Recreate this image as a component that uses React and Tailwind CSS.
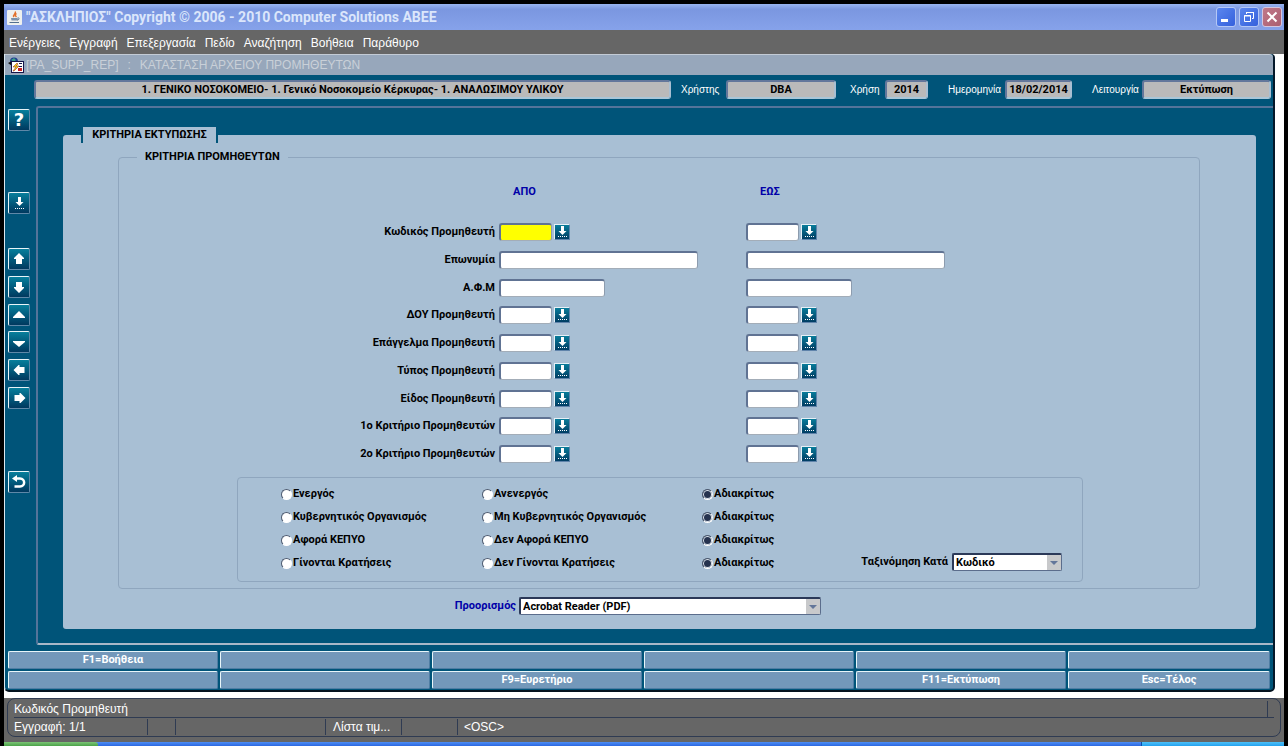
import React from "react";

const SANS = "font-['Liberation_Sans',Arial,sans-serif]";
const BOLD = "font-['Roboto','Noto_Sans',sans-serif] font-bold text-[11px] leading-4";

const menus = ["Ενέργειες", "Εγγραφή", "Επεξεργασία", "Πεδίο", "Αναζήτηση", "Βοήθεια", "Παράθυρο"];

const criteria = [
  { label: "Κωδικός Προμηθευτή", size: "sm", lov: true, active: true },
  { label: "Επωνυμία", size: "lg" },
  { label: "Α.Φ.Μ", size: "md" },
  { label: "ΔΟΥ Προμηθευτή", size: "sm", lov: true },
  { label: "Επάγγελμα Προμηθευτή", size: "sm", lov: true },
  { label: "Τύπος Προμηθευτή", size: "sm", lov: true },
  { label: "Είδος Προμηθευτή", size: "sm", lov: true },
  { label: "1ο Κριτήριο Προμηθευτών", size: "sm", lov: true },
  { label: "2ο Κριτήριο Προμηθευτών", size: "sm", lov: true },
];

const widths = { sm: "w-[53px]", md: "w-[106px]", lg: "w-[199px]" };

const radios = [
  ["Ενεργός", "Ανενεργός", "Αδιακρίτως"],
  ["Κυβερνητικός Οργανισμός", "Μη Κυβερνητικός Οργανισμός", "Αδιακρίτως"],
  ["Αφορά ΚΕΠΥΟ", "Δεν Αφορά ΚΕΠΥΟ", "Αδιακρίτως"],
  ["Γίνονται Κρατήσεις", "Δεν Γίνονται Κρατήσεις", "Αδιακρίτως"],
];

const fkeys = [
  "F1=Βοήθεια", "", "", "", "", "",
  "", "", "F9=Ευρετήριο", "", "F11=Εκτύπωση", "Esc=Τέλος",
];

const tools = [
  { name: "Βοήθεια", gap: "", icon: "help" },
  { name: "Λίστα τιμών", gap: "mt-[61px]", icon: "list" },
  { name: "Πρώτη εγγραφή", gap: "mt-[34px]", icon: "up" },
  { name: "Τελευταία εγγραφή", gap: "mt-[6px]", icon: "down" },
  { name: "Προηγούμενη", gap: "mt-[6px]", icon: "triUp" },
  { name: "Επόμενη", gap: "mt-[5px]", icon: "triDown" },
  { name: "Αριστερά", gap: "mt-[6px]", icon: "left" },
  { name: "Δεξιά", gap: "mt-[6px]", icon: "right" },
  { name: "Επιστροφή", gap: "mt-[62px]", icon: "back" },
];

function ToolIcon({ name }) {
  if (name === "help") {
    return <span className="font-['DejaVu_Sans',sans-serif] text-lg font-bold leading-none text-white">?</span>;
  }
  return (
    <svg width="18" height="18" viewBox="0 0 18 18" fill="#fff" aria-hidden="true">
      {name === "list" && (
        <g>
          <path d="M8 3h3v5h2.500l-4 4-4-4H8z" />
          <path d="M5 14.500h10" stroke="#fff" strokeDasharray="1 1" />
        </g>
      )}
      {name === "up" && <path d="M9 3l5 5v1h-2v5H6V9H4V8z" />}
      {name === "down" && <path d="M9 15l5-5V9h-2V4H6v5H4v1z" />}
      {name === "triUp" && <path d="M9 5l6 6v1H3v-1z" />}
      {name === "triDown" && <path d="M9 14L3 9V8h12v1z" />}
      {name === "left" && <path d="M3.500 9l5-5h1v2h5v6h-5v2h-1z" />}
      {name === "right" && <path d="M15.500 9l-5-5h-1v2h-5v6h5v2h1z" />}
      {name === "back" && (
        <g>
          <path d="M4 5.500h6c5.500 0 5.500 8 0 8H4.500" fill="none" stroke="#fff" strokeWidth="2.500" />
          <path d="M2 5.500L7 2v7z" />
        </g>
      )}
    </svg>
  );
}

function LovButton({ label }) {
  return (
    <button
      type="button"
      aria-label={`Λίστα τιμών: ${label}`}
      className="ml-[2px] flex size-4 items-center justify-center border border-t-[#e6f0f6] border-l-[#e6f0f6] border-r-[#5f83aa] border-b-[#5f83aa] bg-linear-to-b from-[#0a7c9a] to-[#013d63]"
    >
      <svg width="14" height="14" viewBox="0 0 14 14" aria-hidden="true">
        <path d="M6 1h3v5h2.500L7.500 10 3.500 6H6z" fill="#fff" />
        <path d="M3 11.500h9" stroke="#fff" strokeDasharray="1 1" />
      </svg>
    </button>
  );
}

function Field({ row, side }) {
  return (
    <div className="flex items-center">
      <input
        type="text"
        aria-label={`${row.label} ${side}`}
        className={`h-[18px] rounded-[3px] border border-t-2 border-l-2 border-t-[#607393] border-l-[#607393] border-r-[#8d9cae] border-b-[#a3adb8] px-1 outline-none ${BOLD} ${widths[row.size]} ${row.active && side === "ΑΠΟ" ? "bg-[#ffff00]" : "bg-white"}`}
      />
      {row.lov && <LovButton label={`${row.label} ${side}`} />}
    </div>
  );
}

function Select({ id, width, value }) {
  return (
    <div className={`relative h-[18px] ${width}`}>
      <select
        id={id}
        className={`block size-full appearance-none rounded-[2px] border border-t-2 border-l-2 border-[#5b6d8c] border-t-[#2b3958] border-l-[#2b3958] bg-white pl-[2px] text-black outline-none ${BOLD}`}
      >
        <option>{value}</option>
      </select>
      <span className="pointer-events-none absolute top-[2px] right-px bottom-px flex w-[14px] items-center justify-center bg-[#c8c9cb]">
        <svg width="8" height="4" viewBox="0 0 8 4" aria-hidden="true">
          <path d="M0 0h8L4 4z" fill="#63769a" />
        </svg>
      </span>
    </div>
  );
}

function Info({ label, value, size, width }) {
  return (
    <div className={`flex items-center justify-between ${size}`}>
      {label && <span className={`text-[10px] whitespace-nowrap text-white ${SANS}`}>{label}</span>}
      <output
        className={`flex h-[19px] items-center justify-center rounded-[3px] border-2 border-t-[#63779b] border-l-[#63779b] border-r-[#a9bfd2] border-b-[#a9c6d8] bg-[#bababa] whitespace-nowrap text-black ${BOLD} ${width}`}
      >
        {value}
      </output>
    </div>
  );
}

export default function App() {
  return (
    <div className="min-h-screen bg-black pt-1 pr-1 pl-1">
      {/* Window title */}
      <header className="flex h-[26px] items-center bg-linear-to-b from-[#98b4f0] via-[#7b97e0] via-20% to-[#86a2ea] pr-[2px] pl-[3px]">
        <svg width="15" height="15" viewBox="0 0 15 15" aria-hidden="true">
          <rect width="15" height="15" rx="1" fill="#eef0ee" />
          <path d="M8 1.500c2 2-3 3-1 5.500M9.500 3.500c-2 1-1.500 2 0 3.500" fill="none" stroke="#e2702a" strokeWidth="1.400" />
          <path d="M4 8h6.500v2.500h-6z" fill="#7890ac" />
          <path d="M10.500 8c2.500-.5 2 2-.5 2M2.500 12.500h9.500" fill="none" stroke="#53708f" />
        </svg>
        <h1 className="ml-[4px] grow font-['Roboto','Noto_Sans',sans-serif] text-[14px] leading-5 font-bold text-[#dbe6fb]">
          "ΑΣΚΛΗΠΙΟΣ" Copyright © 2006 - 2010 Computer Solutions ABEE
        </h1>
        <div className="flex gap-[3px]">
          <button type="button" aria-label="Ελαχιστοποίηση" className="size-5 rounded-[3px] border border-[#b5c8f6] bg-linear-to-br from-[#5b86ee] to-[#3560dc]">
            <svg width="18" height="18" viewBox="0 0 18 18" aria-hidden="true"><path d="M4 11h7v3H4z" fill="#fff" /></svg>
          </button>
          <button type="button" aria-label="Επαναφορά" className="size-5 rounded-[3px] border border-[#b5c8f6] bg-linear-to-br from-[#5b86ee] to-[#3560dc]">
            <svg width="18" height="18" viewBox="0 0 18 18" fill="none" stroke="#fff" aria-hidden="true">
              <path d="M6.500 6V4.500h7v6H12M6 4.500h8M4.500 7.500h6v6h-6zM4 8h7" />
            </svg>
          </button>
          <button type="button" aria-label="Κλείσιμο" className="size-5 rounded-[3px] border border-[#d5c6de] bg-linear-to-br from-[#c0788a] to-[#ab5f70]">
            <svg width="18" height="18" viewBox="0 0 18 18" aria-hidden="true"><path d="M4.500 4.500l9 9M13.500 4.500l-9 9" stroke="#fff" strokeWidth="2" /></svg>
          </button>
        </div>
      </header>

      {/* Menu bar */}
      <nav className={`flex h-6 items-center gap-[9px] bg-[#666666] pt-px pl-[5px] text-[12px] text-white ${SANS}`}>
        {menus.map((m) => (
          <button key={m} type="button">{m}</button>
        ))}
      </nav>

      <div className="bg-white pr-[9px] pb-[6px]">
        <main className="rounded-tr-[4px] rounded-b-[5px] border-r-2 border-b-2 border-l border-r-[#04182a] border-b-[#04121e] border-l-[#dce8f0] bg-[#005479]">
          {/* Form title */}
          <div className={`flex h-[21px] items-center rounded-tr-[4px] border-t border-[#c3cbd5] bg-[#97a7bb] pl-[3px] text-[12px] text-[#c9d0d8] ${SANS}`}>
            <svg width="16" height="16" viewBox="0 0 16 16" className="shrink-0" aria-hidden="true">
              <circle cx="6" cy="4.500" r="4" fill="#1d3d8f" />
              <path d="M3 3l3-2 2 2-2 2z" fill="#3da08a" />
              <path d="M0 6l4-2v5z" fill="#111" />
              <rect x="3.500" y="4.500" width="12" height="11" fill="#fff" stroke="#15154a" />
              <path d="M11 6.500h3M11 9.500h3" stroke="#15154a" />
              <path d="M5 14l3-4H5l4-4 1 1-2 2h3l-5 5z" fill="#f4d813" stroke="#8a1a1a" strokeWidth=".5" />
              <rect x="10" y="11" width="4" height="3" fill="#c22" />
            </svg>
            <h2 className="ml-[2px] flex gap-[9px] whitespace-pre">
              <span>[PA_SUPP_REP]</span>
              <span>:</span>
              <span>ΚΑΤΑΣΤΑΣΗ ΑΡΧΕΙΟΥ ΠΡΟΜΗΘΕΥΤΩΝ</span>
            </h2>
          </div>

          {/* Context row */}
          <div className="flex pt-[5px] pr-[2px] pl-[29px]">
            <Info value="1. ΓΕΝΙΚΟ ΝΟΣΟΚΟΜΕΙΟ- 1. Γενικό Νοσοκομείο Κέρκυρας- 1. ΑΝΑΛΩΣΙΜΟΥ ΥΛΙΚΟΥ" size="grow" width="grow" />
            <Info label="Χρήστης" value="DBA" size="ml-[10px] w-[155px]" width="w-[110px]" />
            <Info label="Χρήση" value="2014" size="ml-[14px] w-[78px]" width="w-[43px]" />
            <Info label="Ημερομηνία" value="18/02/2014" size="ml-5 w-[124px]" width="w-[67px]" />
            <Info label="Λειτουργία" value="Εκτύπωση" size="ml-5 w-[179px]" width="w-[129px]" />
          </div>

          <div className="mt-[7px] flex">
            {/* Toolbar */}
            <aside className="w-[31px] shrink-0 pt-[3px] pl-[3px]">
              {tools.map((t) => (
                <button
                  key={t.name}
                  type="button"
                  aria-label={t.name}
                  className={`flex size-[22px] items-center justify-center rounded-[2px] border border-t-[#e8f4f8] border-l-[#e8f4f8] border-r-[#5f88a8] border-b-[#5f88a8] bg-linear-to-b from-[#087f9c] to-[#01395f] ${t.gap}`}
                >
                  <ToolIcon name={t.icon} />
                </button>
              ))}
            </aside>

            {/* Canvas */}
            <div className="grow rounded-l-[3px] border-y-2 border-l-2 border-t-[#54749a] border-b-[#a9b8c8] border-l-[#54749a] pt-[27px] pr-[17px] pb-[14px] pl-[25px]">
              <section className="rounded-[3px] bg-[#a8bfd4] pb-[14px]">
                <h3 className={`relative -top-2 ml-[18px] w-[137px] border-x-2 border-[#005479] bg-[#a8bfd4] text-center text-black ${BOLD}`}>
                  ΚΡΙΤΗΡΙΑ ΕΚΤΥΠΩΣΗΣ
                </h3>
                <fieldset className="mr-14 -mt-[2px] ml-[55px] rounded-[4px] border border-[#8fa6be] pb-[6px]">
                  <legend className={`ml-[18px] px-2 text-black ${BOLD}`}>ΚΡΙΤΗΡΙΑ ΠΡΟΜΗΘΕΥΤΩΝ</legend>

                  <div className={`grid grid-cols-[380px_247px_1fr] pt-[19px] text-[#0000a8] ${BOLD}`}>
                    <span />
                    <span className="pl-[14px]">ΑΠΟ</span>
                    <span className="pl-[14px]">ΕΩΣ</span>
                  </div>

                  <div className="mt-[23px] flex h-60 flex-col justify-between">
                    {criteria.map((row) => (
                      <div key={row.label} className="grid grid-cols-[376px_247px_1fr] items-center">
                        <span className={`text-right whitespace-nowrap text-black ${BOLD}`}>{row.label}</span>
                        <div className="pl-1"><Field row={row} side="ΑΠΟ" /></div>
                        <div className="pl-1"><Field row={row} side="ΕΩΣ" /></div>
                      </div>
                    ))}
                  </div>

                  <div className="mt-[14px] mr-[116px] ml-[118px] flex justify-between rounded-[4px] border border-[#8fa6be] pt-2 pr-5 pb-[10px] pl-[43px]">
                    <div className="flex flex-col gap-[7px]">
                      {radios.map((group, g) => (
                        <div key={group[0]} className="grid grid-cols-[201px_220px_100px]">
                          {group.map((text, i) => (
                            <label key={i} className={`flex items-center gap-px whitespace-nowrap text-black ${BOLD}`}>
                              <input
                                type="radio"
                                name={`group-${g}`}
                                defaultChecked={i === 2}
                                className="size-[11px] appearance-none rounded-full border border-t-[#4d5a70] border-l-[#4d5a70] border-r-white border-b-white bg-white checked:bg-[#26334f] checked:shadow-[inset_0_0_0_1px_#dfe8f0]"
                              />
                              {text}
                            </label>
                          ))}
                        </div>
                      ))}
                    </div>
                    <div className="flex items-center gap-1 self-end">
                      <label htmlFor="sort" className={`whitespace-nowrap text-black ${BOLD}`}>Ταξινόμηση Κατά</label>
                      <Select id="sort" width="w-[110px]" value="Κωδικό" />
                    </div>
                  </div>
                </fieldset>

                <div className="mt-2 grid grid-cols-[453px_1fr] items-center gap-[3px]">
                  <label htmlFor="dest" className={`text-right text-[#0000a8] ${BOLD}`}>Προορισμός</label>
                  <Select id="dest" width="w-[302px]" value="Acrobat Reader (PDF)" />
                </div>
              </section>
            </div>
          </div>

          {/* Function keys */}
          <div className="mt-[6px] grid grid-cols-[repeat(5,210fr)_202fr] gap-[2px] pr-[3px] pb-px pl-[3px]">
            {fkeys.map((k, i) => (
              <button
                key={i}
                type="button"
                aria-label={k || "Κενό πλήκτρο"}
                className={`h-[18px] rounded-[2px] border border-t-[#e8f6fa] border-l-[#e8f6fa] border-r-[#4f7da3] border-b-[#4f7da3] bg-[#7398ba] text-white ${BOLD}`}
              >
                {k}
              </button>
            ))}
          </div>
        </main>
      </div>

      {/* Status bar */}
      <footer className={`bg-[#666666] pr-[3px] pb-[5px] pl-[3px] text-[12px] leading-4 text-white ${SANS}`}>
        <div className="rounded-[8px] border border-[#2f3b52] px-[6px]">
          <div className="flex h-[19px] justify-between border-b border-[#2f3b52] pt-[2px]">
            <span>Κωδικός Προμηθευτή</span>
            <span className="mr-[6px] border-r border-[#2f3b52]" />
          </div>
          <div className="flex h-[18px] py-px">
            <span className="w-[134px] border-r border-[#2f3b52]">Εγγραφή: 1/1</span>
            <span className="w-7 border-r border-[#2f3b52]" />
            <span className="w-[150px] border-r border-[#2f3b52]" />
            <span className="w-[76px] border-r border-[#2f3b52] pl-[7px]">Λίστα τιμ...</span>
            <span className="w-14 border-r border-[#2f3b52]" />
            <span className="pl-[6px]">&lt;OSC&gt;</span>
          </div>
        </div>
      </footer>

      {/* Task bar */}
      <div className="flex h-[5px] bg-linear-to-b from-[#4d8df5] to-[#245edb]">
        <div className="w-[94px] rounded-tr-[3px] bg-linear-to-b from-[#7cc576] to-[#3c9a3c]" />
        <div className="grow" />
        <div className="w-[143px] border-l border-[#0b4fa8] bg-linear-to-b from-[#4cc0f8] to-[#129aec]" />
      </div>
    </div>
  );
}
